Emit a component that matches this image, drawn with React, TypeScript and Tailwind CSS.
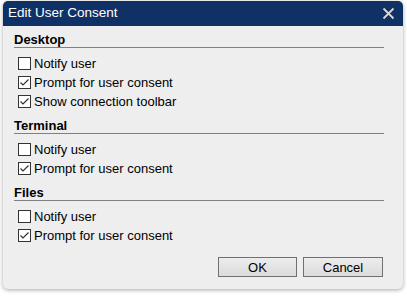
import React from "react";

type Opt = { label: string; checked: boolean };

const sections: { title: string; options: Opt[] }[] = [
    {
        title: "Desktop",
        options: [
            { label: "Notify user", checked: false },
            { label: "Prompt for user consent", checked: true },
            { label: "Show connection toolbar", checked: true },
        ],
    },
    {
        title: "Terminal",
        options: [
            { label: "Notify user", checked: false },
            { label: "Prompt for user consent", checked: true },
        ],
    },
    {
        title: "Files",
        options: [
            { label: "Notify user", checked: false },
            { label: "Prompt for user consent", checked: true },
        ],
    },
];

function CheckBox({ checked }: { checked: boolean }) {
    return (
        <span className="flex h-[13px] w-[13px] shrink-0 items-center justify-center border border-[#333333] bg-white">
            {checked && (
                <svg width="11" height="11" viewBox="0 0 11 11">
                    <path d="M1.5 5.5 L4 8 L9.5 2.5" fill="none" stroke="#333333" strokeWidth="1.2" />
                </svg>
            )}
        </span>
    );
}

export default function App() {
    return (
        <div className="h-[296px] w-[407px] bg-white pl-[3px] pt-[1px] font-['Liberation_Sans',Arial,sans-serif]">
            <div className="flex h-[288px] w-[400px] flex-col overflow-hidden rounded-[5px] bg-[#eeeeee] shadow-[0_1px_4px_rgba(0,0,0,0.35)]">
                <div className="flex h-[25px] shrink-0 items-center justify-between bg-[#0f3166] pl-[5px] pr-[8px]">
                    <span className="text-[13.5px] text-white">Edit User Consent</span>
                    <svg width="13" height="13" viewBox="0 0 13 13">
                        <path d="M1.5 1.5 L11.5 11.5 M11.5 1.5 L1.5 11.5" stroke="#d8d8d8" strokeWidth="1.8" />
                    </svg>
                </div>
                <div className="ml-[11px] mr-[19px] flex flex-col pt-[6px]">
                    {sections.map((s) => (
                        <div key={s.title} className="flex flex-col">
                            <div className="border-b border-[#808080] text-[13px] font-bold leading-[15px] text-black">
                                {s.title}
                            </div>
                            <div className="flex flex-col pb-[7px] pt-[6px]">
                                {s.options.map((o) => (
                                    <label key={o.label} className="flex h-[19px] items-center gap-[3px] pl-[4px] text-[13px] text-black">
                                        <CheckBox checked={o.checked} />
                                        {o.label}
                                    </label>
                                ))}
                            </div>
                        </div>
                    ))}
                </div>
                <div className="mt-auto flex justify-end gap-[6px] pb-[12px] pr-[20px]">
                    <button className="h-[20px] w-[79px] border border-[#707070] bg-[linear-gradient(#ececec,#dcdcdc)] text-[13px] text-black">
                        OK
                    </button>
                    <button className="h-[20px] w-[80px] border border-[#707070] bg-[linear-gradient(#ececec,#dcdcdc)] text-[13px] text-black">
                        Cancel
                    </button>
                </div>
            </div>
        </div>
    );
}
